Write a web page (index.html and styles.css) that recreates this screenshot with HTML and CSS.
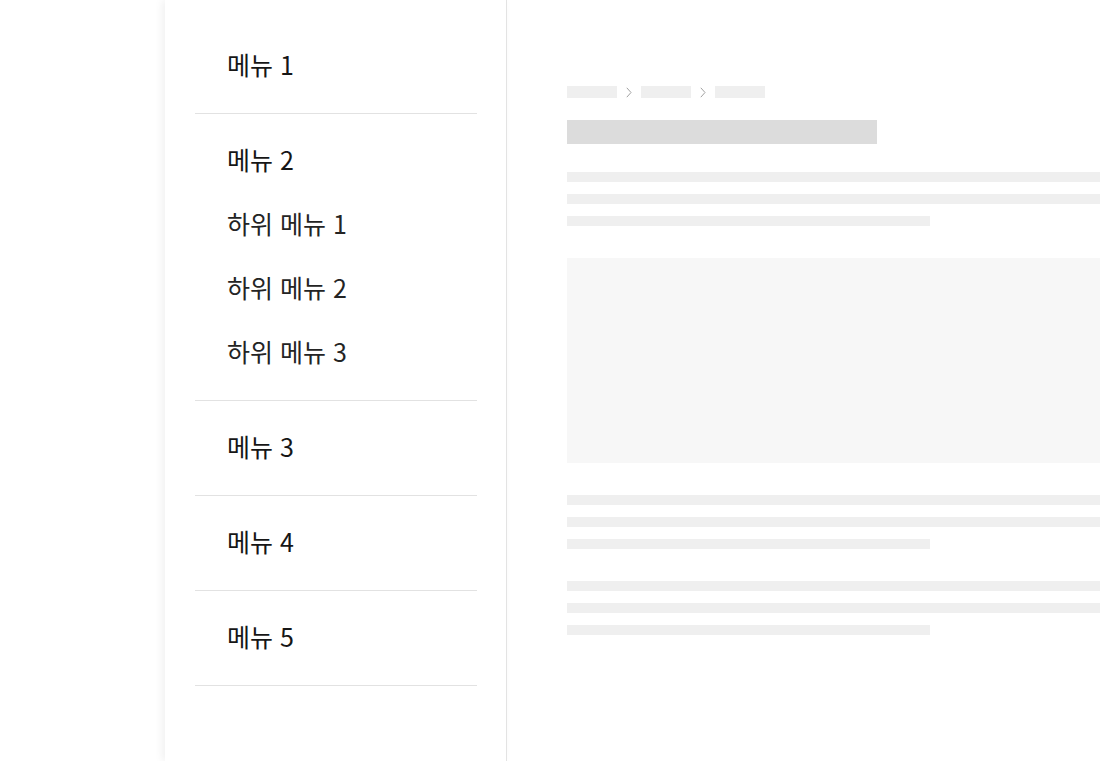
FILE: index.html
```html
<!DOCTYPE html>
<html lang="ko">
<head>
<meta charset="utf-8">
<title>메뉴</title>
<link rel="stylesheet" href="styles.css">
</head>
<body>
<div class="layout">
  <div class="gutter"></div>
  <nav class="sidebar">
    <div class="group">
      <div class="item title">메뉴 1</div>
    </div>
    <div class="group">
      <div class="item title">메뉴 2</div>
      <div class="item sub">하위 메뉴 1</div>
      <div class="item sub">하위 메뉴 2</div>
      <div class="item sub">하위 메뉴 3</div>
    </div>
    <div class="group">
      <div class="item title">메뉴 3</div>
    </div>
    <div class="group">
      <div class="item title">메뉴 4</div>
    </div>
    <div class="group">
      <div class="item title">메뉴 5</div>
    </div>
  </nav>
  <main class="main">
    <div class="crumbs">
      <span class="crumb"></span>
      <svg class="chev" width="6" height="11" viewBox="0 0 6 11"><path d="M0.8 0.8 L5 5.5 L0.8 10.2" fill="none" stroke="#a0a0a0" stroke-width="1"/></svg>
      <span class="crumb"></span>
      <svg class="chev" width="6" height="11" viewBox="0 0 6 11"><path d="M0.8 0.8 L5 5.5 L0.8 10.2" fill="none" stroke="#a0a0a0" stroke-width="1"/></svg>
      <span class="crumb"></span>
    </div>
    <div class="heading"></div>
    <div class="para">
      <div class="line"></div>
      <div class="line"></div>
      <div class="line short"></div>
    </div>
    <div class="block"></div>
    <div class="para">
      <div class="line"></div>
      <div class="line"></div>
      <div class="line short"></div>
    </div>
    <div class="para">
      <div class="line"></div>
      <div class="line"></div>
      <div class="line short"></div>
    </div>
  </main>
</div>
</body>
</html>
```
FILE: styles.css
```css
html, body {
  margin: 0;
  padding: 0;
  background: #ffffff;
}
body {
  width: 1100px;
  height: 761px;
  overflow: hidden;
  font-family: "Noto Sans CJK KR", "Noto Sans", sans-serif;
  color: #1c1c1c;
}
.layout {
  display: flex;
  height: 761px;
}
.gutter {
  width: 165px;
  flex: none;
}
.sidebar {
  width: 342px;
  flex: none;
  box-sizing: border-box;
  padding: 19px 29px 0 30px;
  border-right: 1px solid #e3e3e3;
  box-shadow: -3px 0 8px rgba(0, 0, 0, 0.06);
  background: #fff;
}
.group {
  padding: 15px 0;
  border-bottom: 1px solid #e2e2e2;
}
.item {
  height: 64px;
  line-height: 60px;
  padding-left: 32px;
  font-size: 25px;
  white-space: nowrap;
}
.title {
  color: #161616;
}
.sub {
  color: #242424;
}
.main {
  flex: 1;
  min-width: 0;
  overflow: hidden;
  padding: 86px 0 0 60px;
}
.crumbs {
  display: flex;
  align-items: center;
  gap: 9px;
  height: 12px;
}
.crumb {
  display: block;
  width: 50px;
  height: 12px;
  background: #efefef;
}
.chev {
  display: block;
  flex: none;
}
.heading {
  width: 310px;
  height: 24px;
  margin-top: 22px;
  background: #dcdcdc;
}
.para {
  display: flex;
  flex-direction: column;
  gap: 12px;
  margin-top: 32px;
}
.heading + .para {
  margin-top: 28px;
}
.line {
  width: 600px;
  height: 10px;
  background: #efefef;
}
.line.short {
  width: 363px;
}
.block {
  width: 600px;
  height: 205px;
  margin-top: 32px;
  background: #f7f7f7;
}
```
